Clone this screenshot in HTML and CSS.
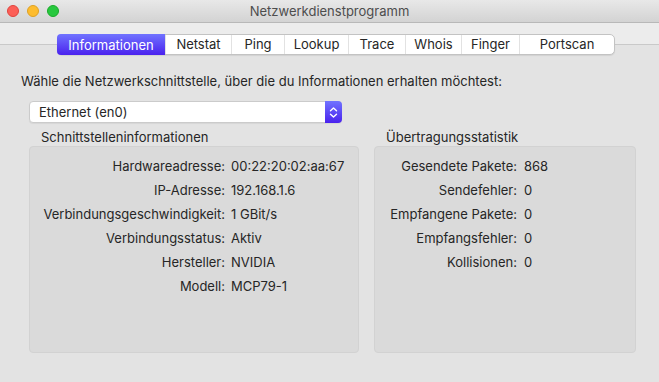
FILE: index.html
```html
<!DOCTYPE html>
<html>
<head>
  <title>Netzwerkdienstprogramm</title>
  <link rel="stylesheet" href="styles.css">
</head>
<body>
  <div class="window">
    <div class="titlebar">
      <div class="lights">
        <span class="light red"></span>
        <span class="light yellow"></span>
        <span class="light green"></span>
      </div>
      <div class="title">Netzwerkdienstprogramm</div>
    </div>

    <div class="tabbar">
      <div class="tabs">
        <span class="tab active">Informationen</span>
        <span class="tab">Netstat</span>
        <span class="tab">Ping</span>
        <span class="tab">Lookup</span>
        <span class="tab">Trace</span>
        <span class="tab">Whois</span>
        <span class="tab">Finger</span>
        <span class="tab">Portscan</span>
      </div>
    </div>

    <div class="content">
      <p class="prompt">Wähle die Netzwerkschnittstelle, über die du Informationen erhalten möchtest:</p>

      <div class="select">
        <span class="select-value">Ethernet (en0)</span>
        <span class="select-arrow">
          <svg width="9" height="13" viewBox="0 0 9 13">
            <path d="M1.5 4.8 L4.5 2 L7.5 4.8" fill="none" stroke="#fff" stroke-width="1.4" stroke-linecap="round" stroke-linejoin="round"/>
            <path d="M1.5 8.2 L4.5 11 L7.5 8.2" fill="none" stroke="#fff" stroke-width="1.4" stroke-linecap="round" stroke-linejoin="round"/>
          </svg>
        </span>
      </div>

      <div class="panels">
        <div class="panel panel-left">
          <div class="panel-title">Schnittstelleninformationen</div>
          <div class="box">
            <div class="row"><span class="key">Hardwareadresse:</span><span class="val">00:22:20:02:aa:67</span></div>
            <div class="row"><span class="key">IP-Adresse:</span><span class="val">192.168.1.6</span></div>
            <div class="row"><span class="key">Verbindungsgeschwindigkeit:</span><span class="val">1 GBit/s</span></div>
            <div class="row"><span class="key">Verbindungsstatus:</span><span class="val">Aktiv</span></div>
            <div class="row"><span class="key">Hersteller:</span><span class="val">NVIDIA</span></div>
            <div class="row"><span class="key">Modell:</span><span class="val">MCP79-1</span></div>
          </div>
        </div>

        <div class="panel panel-right">
          <div class="panel-title">Übertragungsstatistik</div>
          <div class="box">
            <div class="row"><span class="key">Gesendete Pakete:</span><span class="val">868</span></div>
            <div class="row"><span class="key">Sendefehler:</span><span class="val">0</span></div>
            <div class="row"><span class="key">Empfangene Pakete:</span><span class="val">0</span></div>
            <div class="row"><span class="key">Empfangsfehler:</span><span class="val">0</span></div>
            <div class="row"><span class="key">Kollisionen:</span><span class="val">0</span></div>
          </div>
        </div>
      </div>
    </div>
  </div>
</body>
</html>
```

FILE: styles.css
```css
:root {
  --text: #262626;
  --window: #ececec;
  --pane: #e3e3e3;
  --box: #dadada;
  --box-border: #d2d2d2;
  --blue-top: #7073ff;
  --blue-bottom: #4a22ee;
}

body {
  margin: 0;
  font-family: Inter, "Liberation Sans", Arial, sans-serif;
  font-size: 13px;
  color: var(--text);
  background: var(--pane);
}

.window {
  width: 659px;
  height: 382px;
  overflow: hidden;
  background: var(--pane);
}

.titlebar {
  height: 22px;
  display: flex;
  align-items: center;
  background: linear-gradient(#e8e8e8, #d3d3d3);
  border-bottom: 1px solid #b8b8b8;
}

.lights {
  display: flex;
  gap: 8px;
  padding-left: 7px;
  width: 60px;
}

.light {
  width: 12px;
  height: 12px;
  border-radius: 50%;
  box-sizing: border-box;
}

.red { background: #fc5f57; border: 1px solid #e0443e; }
.yellow { background: #fdbc2e; border: 1px solid #dea123; }
.green { background: #28c83f; border: 1px solid #1aab29; }

.title {
  flex: 1;
  text-align: center;
  color: #4d4d4d;
  padding-right: 67px;
}

.tabbar {
  padding-top: 11px;
  padding-left: 57px;
  background: linear-gradient(var(--window) 21px, #c9c9c9 21px, #c9c9c9 22px, var(--pane) 22px);
}

.tabs {
  display: inline-flex;
  height: 19px;
  border: 1px solid #c3c3c3;
  border-radius: 5px;
  background: #fff;
  box-shadow: 0 1px 1px rgba(0, 0, 0, 0.08);
}

.tab {
  display: flex;
  align-items: center;
  justify-content: center;
  border-left: 1px solid #e2e2e2;
  line-height: 19px;
}

.tab:first-child { border-left: none; }

.tab.active {
  color: #fff;
  background: linear-gradient(var(--blue-top), var(--blue-bottom));
  border-radius: 4px 0 0 4px;
  margin: -1px 0 -1px -1px;
  padding-top: 1px;
  height: 20px;
  width: 108px;
}

.tab:nth-child(2) { width: 65px; }
.tab:nth-child(3) { width: 52px; }
.tab:nth-child(4) { width: 63px; }
.tab:nth-child(5) { width: 56px; }
.tab:nth-child(6) { width: 55px; }
.tab:nth-child(7) { width: 57px; }
.tab:nth-child(8) { width: 94px; }

.content {
  padding: 0 23px 0 21px;
}

.prompt {
  margin: 18px 0 0;
  line-height: 16px;
}

.select {
  display: flex;
  align-items: center;
  margin: 12px 0 0 8px;
  width: 313px;
  height: 22px;
  box-sizing: border-box;
  background: #fff;
  border: 1px solid #cbcbcb;
  border-radius: 4px;
  box-shadow: 0 1px 1px rgba(0, 0, 0, 0.06);
}

.select-value {
  flex: 1;
  padding-left: 9px;
}

.select-arrow {
  width: 17px;
  height: 22px;
  margin-right: -1px;
  display: flex;
  align-items: center;
  justify-content: center;
  background: linear-gradient(var(--blue-top), var(--blue-bottom));
  border-radius: 0 4px 4px 0;
}

.panels {
  display: flex;
  gap: 15px;
  margin: 6px 0 0 8px;
}

.panel-title {
  padding-left: 12px;
  line-height: 17px;
}

.box {
  height: 207px;
  box-sizing: border-box;
  padding-top: 7px;
  background: var(--box);
  border: 1px solid var(--box-border);
  border-radius: 4px;
}

.panel-left { width: 330px; }
.panel-right { width: 262px; }

.row {
  display: flex;
  height: 24px;
  align-items: center;
}

.key {
  text-align: right;
  flex-shrink: 0;
}

.panel-left .key { width: 195px; margin-right: 6px; }
.panel-right .key { width: 142px; margin-right: 7px; }
```
